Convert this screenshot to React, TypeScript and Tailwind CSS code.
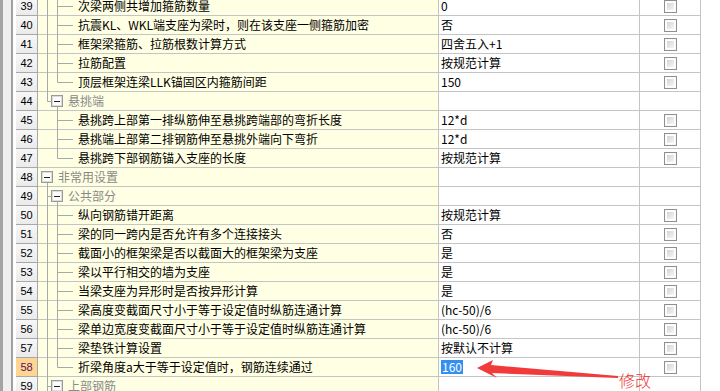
import React from "react";

type Row = {
  no: number;
  label: string;
  value?: string;
  kind: "item" | "g0" | "g1";
  check?: boolean;
  // tree guides
  l0?: "full" | "half" | "none";
  l2?: "full" | "half" | "none";
  selected?: boolean;
};

const rows: Row[] = [
  { no: 39, label: "次梁两侧共增加箍筋数量", value: "0", kind: "item", check: true, l0: "full", l2: "full" },
  { no: 40, label: "抗震KL、WKL端支座为梁时，则在该支座一侧箍筋加密", value: "否", kind: "item", check: true, l0: "full", l2: "full" },
  { no: 41, label: "框架梁箍筋、拉筋根数计算方式", value: "四舍五入+1", kind: "item", check: true, l0: "full", l2: "full" },
  { no: 42, label: "拉筋配置", value: "按规范计算", kind: "item", check: true, l0: "full", l2: "full" },
  { no: 43, label: "顶层框架连梁LLK锚固区内箍筋间距", value: "150", kind: "item", check: true, l0: "full", l2: "half" },
  { no: 44, label: "悬挑端", kind: "g1", l0: "half" },
  { no: 45, label: "悬挑跨上部第一排纵筋伸至悬挑跨端部的弯折长度", value: "12*d", kind: "item", check: true, l0: "none", l2: "full" },
  { no: 46, label: "悬挑端上部第二排钢筋伸至悬挑外端向下弯折", value: "12*d", kind: "item", check: true, l0: "none", l2: "full" },
  { no: 47, label: "悬挑跨下部钢筋锚入支座的长度", value: "按规范计算", kind: "item", check: true, l0: "none", l2: "half" },
  { no: 48, label: "非常用设置", kind: "g0" },
  { no: 49, label: "公共部分", kind: "g1", l0: "full" },
  { no: 50, label: "纵向钢筋错开距离", value: "按规范计算", kind: "item", check: true, l0: "full", l2: "full" },
  { no: 51, label: "梁的同一跨内是否允许有多个连接接头", value: "否", kind: "item", check: true, l0: "full", l2: "full" },
  { no: 52, label: "截面小的框架梁是否以截面大的框架梁为支座", value: "是", kind: "item", check: true, l0: "full", l2: "full" },
  { no: 53, label: "梁以平行相交的墙为支座", value: "是", kind: "item", check: true, l0: "full", l2: "full" },
  { no: 54, label: "当梁支座为异形时是否按异形计算", value: "是", kind: "item", check: true, l0: "full", l2: "full" },
  { no: 55, label: "梁高度变截面尺寸小于等于设定值时纵筋连通计算", value: "(hc-50)/6", kind: "item", check: true, l0: "full", l2: "full" },
  { no: 56, label: "梁单边宽度变截面尺寸小于等于设定值时纵筋连通计算", value: "(hc-50)/6", kind: "item", check: true, l0: "full", l2: "full" },
  { no: 57, label: "梁垫铁计算设置", value: "按默认不计算", kind: "item", check: true, l0: "full", l2: "full" },
  { no: 58, label: "折梁角度a大于等于设定值时，钢筋连续通过", value: "160", kind: "item", check: true, l0: "full", l2: "half", selected: true },
  { no: 59, label: "上部钢筋", kind: "g1", l0: "full" },
];

const LINE = "#a8a8a8";

function ExpandBox({ x }: { x: number }) {
  return (
    <g>
      <rect x={x + 0.5} y={3.5} width={11} height={11} fill="#f4f4f4" stroke="#9a9a9a" />
      <rect x={x + 1.5} y={4.5} width={9} height={9} fill="#fdfdfd" stroke="#dcdcdc" />
      <line x1={x + 3} y1={9.5} x2={x + 9} y2={9.5} stroke="#202020" />
    </g>
  );
}

function Guides({ row }: { row: Row }) {
  const lines: React.ReactNode[] = [];
  if (row.l0 === "full") lines.push(<line key="a" x1={9.5} y1={0} x2={9.5} y2={19} stroke={LINE} />);
  if (row.l0 === "half") lines.push(<line key="a" x1={9.5} y1={0} x2={9.5} y2={9.5} stroke={LINE} />);
  if (row.kind === "item") {
    if (row.l2 === "full") lines.push(<line key="b" x1={19.5} y1={0} x2={19.5} y2={19} stroke={LINE} />);
    if (row.l2 === "half") lines.push(<line key="b" x1={19.5} y1={0} x2={19.5} y2={9.5} stroke={LINE} />);
    lines.push(<line key="c" x1={19.5} y1={9.5} x2={35} y2={9.5} stroke={LINE} />);
  }
  if (row.kind === "g0") {
    lines.push(<line key="d" x1={9.5} y1={14} x2={9.5} y2={19} stroke={LINE} />);
    lines.push(<ExpandBox key="e" x={3} />);
  }
  if (row.kind === "g1") {
    lines.push(<line key="f" x1={9.5} y1={9.5} x2={13} y2={9.5} stroke={LINE} />);
    lines.push(<line key="g" x1={19.5} y1={14} x2={19.5} y2={19} stroke={LINE} />);
    lines.push(<ExpandBox key="h" x={13} />);
  }
  return (
    <svg width={40} height={18} className="shrink-0 overflow-visible" viewBox="0 0 40 18">
      {lines}
    </svg>
  );
}

function CheckBox() {
  return (
    <span className="flex h-[13px] w-[13px] items-center justify-center border border-[#8f8f8f] bg-[#fafafa]">
      <span className="h-[9px] w-[9px] border border-white bg-gradient-to-br from-[#d4d4d4] to-[#f6f6f6]" />
    </span>
  );
}

function TreeRow({ row }: { row: Row }) {
  return (
    <div className="flex h-[19px]">
      <div
        className={`flex w-[22px] shrink-0 items-center justify-center border-b border-r border-[#a8a8a8] font-['Liberation_Sans',sans-serif] text-[11px] ${
          row.selected ? "bg-[#ffd592] text-[#5a1060]" : "bg-gradient-to-b from-[#f7f7f7] to-[#ebebeb] text-black"
        }`}
      >
        {row.no}
      </div>
      <div className="flex w-[401px] shrink-0 items-center border-b border-r border-[#c4c4c4] bg-[#ffffe3]">
        <Guides row={row} />
        <span
          className={`whitespace-nowrap ${row.kind === "item" ? "text-black" : "text-[#8a8a8a]"} ${
            row.kind === "g0" ? "-ml-[20px]" : row.kind === "g1" ? "-ml-[10px]" : ""
          }`}
        >
          {row.label}
        </span>
      </div>
      <div className="flex w-[201px] shrink-0 items-center border-b border-r border-[#c4c4c4] bg-white pl-[2px]">
        {row.selected ? (
          <span className="bg-[#3390f0] px-px leading-[14px] text-white">{row.value}</span>
        ) : (
          <span className="whitespace-nowrap">{row.value}</span>
        )}
      </div>
      <div className="flex w-[61px] shrink-0 items-center justify-center border-b border-r border-[#c4c4c4] bg-white">
        {row.check && <CheckBox />}
      </div>
    </div>
  );
}

export default function App() {
  return (
    <div className="relative flex h-[391px] w-[720px] overflow-hidden bg-white font-['Noto_Sans_CJK_SC','Liberation_Sans',sans-serif] text-[12px] text-black">
      <div className="w-[3px] shrink-0 bg-[#a4a4a4]" />
      <div className="w-[8px] shrink-0 bg-[#efefef]" />
      <div className="w-[2px] shrink-0 bg-[#a0a0a0]" />
      <div className="w-[3px] shrink-0 bg-white" />
      <div className="-mt-[3px] flex w-[685px] shrink-0 flex-col">
        {rows.map((r) => (
          <TreeRow key={r.no} row={r} />
        ))}
      </div>
      <div className="flex-1 bg-white" />

      <svg className="pointer-events-none absolute left-0 top-0" width={720} height={391} viewBox="0 0 720 391">
        <polygon
          points="477,368 493,360 491,365 618,376 618,378 492,373 497,378"
          fill="#f23a3a"
        />
      </svg>
      <span className="pointer-events-none absolute left-[619px] top-[370px] text-[16px] font-light leading-[20px] text-[#f03030]">
        修改
      </span>
    </div>
  );
}
